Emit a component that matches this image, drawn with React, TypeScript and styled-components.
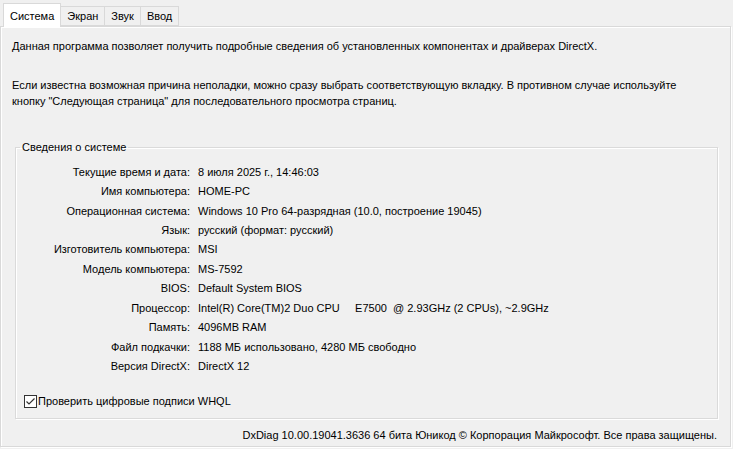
import React from 'react';
import styled, { createGlobalStyle } from 'styled-components';

const GlobalStyle = createGlobalStyle`
  html, body {
    margin: 0;
    padding: 0;
    background: #f0f0f0;
  }
  body {
    font-family: 'Liberation Sans', Arial, sans-serif;
    font-size: 11px;
    color: #000;
  }
`;

const Window = styled.div`
  width: 733px;
  height: 449px;
  display: flex;
  flex-direction: column;
  background: #f0f0f0;
  box-sizing: border-box;
  padding: 2px 2px 2px 0;
`;

const TabStrip = styled.div`
  display: flex;
  align-items: flex-end;
  padding-left: 3px;
  height: 24px;
  position: relative;
  z-index: 1;
`;

const Tab = styled.div<{ $active?: boolean }>`
  box-sizing: border-box;
  height: ${({ $active }) => ($active ? '24px' : '20px')};
  padding: 0 ${({ $active }) => ($active ? '6px' : '6px')};
  margin-bottom: ${({ $active }) => ($active ? '-1px' : '0')};
  display: flex;
  align-items: center;
  background: ${({ $active }) => ($active ? '#ffffff' : '#f0f0f0')};
  border: 1px solid #d9d9d9;
  border-bottom: ${({ $active }) => ($active ? 'none' : '1px solid #d9d9d9')};
  margin-left: -1px;
  &:first-child {
    margin-left: 0;
  }
`;

const Panel = styled.div`
  flex: 1;
  display: flex;
  flex-direction: column;
  box-sizing: border-box;
  border: 1px solid #d9d9d9;
  box-shadow: inset 1px 1px 0 #ffffff, 1px 1px 0 #ffffff;
  padding: 11px 12px 0 11px;
`;

const Para = styled.p<{ $gap?: number }>`
  margin: 0;
  margin-top: ${({ $gap }) => $gap ?? 0}px;
  line-height: 16px;
`;

const Group = styled.fieldset`
  margin: 31px 0 0 3px;
  padding: 8px 0 10px 0;
  border: 1px solid #dadada;
  box-shadow: inset 1px 1px 0 #ffffff, 1px 1px 0 #ffffff;
  border-radius: 0;
  min-width: 0;
`;

const Legend = styled.legend`
  padding: 0 2px;
  margin-left: 4px;
  line-height: 14px;
`;

const InfoGrid = styled.div`
  display: grid;
  grid-template-columns: 174px 1fr;
  column-gap: 8px;
  grid-auto-rows: 19.45px;
  align-items: center;
`;

const Label = styled.div`
  text-align: right;
  white-space: nowrap;
`;

const Value = styled.div`
  white-space: pre;
`;

const CheckRow = styled.label`
  display: flex;
  align-items: center;
  gap: 1px;
  margin: 19px 0 0 8px;
  line-height: 13px;
`;

const Box = styled.span`
  width: 13px;
  height: 13px;
  box-sizing: border-box;
  border: 1px solid #333333;
  background: #ffffff;
  display: flex;
  align-items: center;
  justify-content: center;
`;

const Footer = styled.div`
  text-align: right;
  padding: 8px 1px 0 0;
  line-height: 16px;
`;

const rows: [string, string][] = [
  ['Текущие время и дата:', '8 июля 2025 г., 14:46:03'],
  ['Имя компьютера:', 'HOME-PC'],
  ['Операционная система:', 'Windows 10 Pro 64-разрядная (10.0, построение 19045)'],
  ['Язык:', 'русский (формат: русский)'],
  ['Изготовитель компьютера:', 'MSI'],
  ['Модель компьютера:', 'MS-7592'],
  ['BIOS:', 'Default System BIOS'],
  ['Процессор:', 'Intel(R) Core(TM)2 Duo CPU     E7500  @ 2.93GHz (2 CPUs), ~2.9GHz'],
  ['Память:', '4096MB RAM'],
  ['Файл подкачки:', '1188 МБ использовано, 4280 МБ свободно'],
  ['Версия DirectX:', 'DirectX 12'],
];

const App = () => (
  <>
    <GlobalStyle />
    <Window>
      <TabStrip>
        <Tab $active>Система</Tab>
        <Tab>Экран</Tab>
        <Tab>Звук</Tab>
        <Tab>Ввод</Tab>
      </TabStrip>
      <Panel>
        <Para>
          Данная программа позволяет получить подробные сведения об установленных компонентах и драйверах DirectX.
        </Para>
        <Para $gap={23}>
          Если известна возможная причина неполадки, можно сразу выбрать соответствующую вкладку. В противном случае используйте
          <br />
          кнопку "Следующая страница" для последовательного просмотра страниц.
        </Para>
        <Group>
          <Legend>Сведения о системе</Legend>
          <InfoGrid>
            {rows.map(([label, value]) => (
              <React.Fragment key={label}>
                <Label>{label}</Label>
                <Value>{value}</Value>
              </React.Fragment>
            ))}
          </InfoGrid>
          <CheckRow>
            <Box>
              <svg width="11" height="11" viewBox="0 0 11 11">
                <path d="M1.5 5.5 L4 8 L9.5 2.5" fill="none" stroke="#333" strokeWidth="1.2" />
              </svg>
            </Box>
            <span>Проверить цифровые подписи WHQL</span>
          </CheckRow>
        </Group>
        <Footer>DxDiag 10.00.19041.3636 64 бита Юникод © Корпорация Майкрософт. Все права защищены.</Footer>
      </Panel>
    </Window>
  </>
);

export default App;
